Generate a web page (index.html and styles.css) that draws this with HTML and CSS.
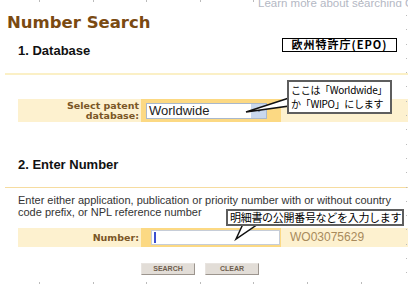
FILE: index.html
```html
<!DOCTYPE html>
<html lang="en">
<head>
  <meta charset="UTF-8">
  <title>Number Search</title>
  <link rel="stylesheet" href="styles.css">
</head>
<body>

  <div class="page">
    <div class="top-link">Learn more about searching Google Patents</div>
    <h1 class="title">Number Search</h1>

    <h2 class="step">1. Database</h2>
    <div class="rule"></div>

    <div class="form-row row-db">
      <div class="label">Select patent<br>database:</div>
      <div class="field">
        <div class="select">
          <span>Worldwide</span>
          <span class="select-arrow">
            <svg viewBox="0 0 8 5"><polygon points="1,1 7,1 4,4"></polygon></svg>
          </span>
        </div>
      </div>
    </div>

    <h2 class="step step-two">2. Enter Number</h2>
    <div class="rule"></div>

    <p class="hint">Enter either application, publication or priority number with or without country code prefix, or NPL reference number</p>

    <div class="form-row row-num">
      <div class="label">Number:</div>
      <div class="field">
        <div class="text-input"><span class="caret"></span></div>
      </div>
      <div class="example">WO03075629</div>
    </div>

    <div class="buttons">
      <button class="btn">SEARCH</button>
      <button class="btn">CLEAR</button>
    </div>
  </div>

  <!-- annotations laid over the screenshot -->
  <div class="tag">欧州特許庁(EPO)</div>

  <svg class="tails" viewBox="0 0 408 285">
    <polygon points="289,98 246,112 289,106"></polygon>
    <polygon points="243,224 236,239 258,224"></polygon>
  </svg>

  <div class="note note-db">ここは「Worldwide」<br>か「WIPO」にします</div>
  <div class="note note-num">明細書の公開番号などを入力します</div>

  <div class="ticks-top"></div>
  <div class="ticks-bottom"></div>
  <div class="ticks-right"></div>

</body>
</html>
```

FILE: styles.css
```css
body {
  margin: 0;
  width: 408px;
  height: 285px;
  overflow: hidden;
  position: relative;
  background: #fff;
  font-family: "Liberation Sans", Arial, sans-serif;
}

.page {
  display: flex;
  flex-direction: column;
}

.top-link {
  margin-top: -3px;
  padding-left: 258px;
  height: 10px;
  font-size: 11.5px;
  line-height: 12px;
  color: #b4b8c4;
  white-space: nowrap;
  overflow: hidden;
}

.title {
  margin: 6px 0 0 7px;
  font-family: "DejaVu Sans", Verdana, sans-serif;
  font-size: 16.5px;
  font-weight: bold;
  line-height: 20px;
  color: #7a4a12;
}

.step {
  margin: 10px 0 0 18px;
  font-size: 13px;
  font-weight: bold;
  line-height: 16px;
  color: #111;
}

.step-two {
  margin-top: 35px;
}

.rule {
  height: 2px;
  margin: 14px 0 0 5px;
  background: #fbf0c6;
}

.step-two + .rule {
  margin-top: 14px;
  height: 1px;
  background: #f6dca0;
}

.form-row {
  display: flex;
  margin-left: 18px;
  background: #fdf1cf;
}

.row-db {
  margin-top: 24px;
  height: 23px;
}

.label {
  width: 123px;
  padding-right: 2px;
  box-sizing: border-box;
  text-align: right;
  font-family: "DejaVu Sans", Verdana, sans-serif;
  font-size: 9.5px;
  font-weight: bold;
  line-height: 10px;
  color: #7a5626;
  display: flex;
  flex-direction: column;
  justify-content: center;
}

.field {
  width: 140px;
  background: #fcd983;
  display: flex;
  align-items: center;
  padding-left: 5px;
  box-sizing: border-box;
}

.select {
  width: 121px;
  height: 16px;
  box-sizing: border-box;
  border: 1px solid #a9b8cc;
  background: #fff;
  display: flex;
  align-items: center;
  justify-content: space-between;
  font-size: 13px;
  color: #222;
  padding-left: 2px;
}

.select-arrow {
  width: 15px;
  height: 14px;
  background: #c9d8ee;
  display: flex;
  align-items: center;
  justify-content: center;
}

.select-arrow svg {
  width: 6px;
  height: 4px;
  fill: #6a7fa0;
}

.hint {
  margin: 6px 0 0 18px;
  width: 388px;
  font-size: 11px;
  line-height: 12px;
  color: #333;
}

.row-num {
  margin-top: 10px;
  height: 19px;
}

.row-num .field {
  padding-left: 10px;
}

.text-input {
  width: 129px;
  height: 15px;
  box-sizing: border-box;
  border: 1px solid #c6cdd8;
  background: #fff;
  display: flex;
  align-items: center;
  padding-left: 2px;
}

.caret {
  width: 2px;
  height: 11px;
  background: #3c4fd0;
}

.example {
  padding-left: 9px;
  font-size: 12px;
  line-height: 19px;
  color: #a88a5c;
}

.buttons {
  display: flex;
  gap: 10px;
  margin: 16px 0 0 141px;
}

.btn {
  width: 54px;
  height: 12px;
  padding: 0;
  border: 1px solid #9c958e;
  border-top-color: #e8e4e0;
  border-left-color: #e8e4e0;
  background: #e2ddd7;
  font-family: "Liberation Sans", Arial, sans-serif;
  font-size: 7px;
  font-weight: bold;
  line-height: 10px;
  color: #6e5e4e;
}

.tag {
  position: absolute;
  left: 282px;
  top: 38px;
  width: 115px;
  height: 14px;
  box-sizing: border-box;
  border: 1.5px solid #000;
  background: #fff;
  font-family: "Noto Sans CJK JP", sans-serif;
  font-size: 11px;
  font-weight: bold;
  line-height: 11px;
  letter-spacing: 1px;
  text-align: center;
  color: #000;
}

.tails {
  position: absolute;
  left: 0;
  top: 0;
  width: 408px;
  height: 285px;
}

.tails polygon {
  fill: #fff;
  stroke: #111;
  stroke-width: 1.5;
}

.note {
  position: absolute;
  box-sizing: border-box;
  border: 2px solid #5e5e5e;
  background: #fff;
  font-family: "Noto Sans CJK JP", sans-serif;
  color: #000;
  white-space: nowrap;
}

.note-db {
  left: 287px;
  top: 80px;
  width: 105px;
  height: 34px;
  padding: 1px 0 0 2px;
  font-size: 10px;
  line-height: 14px;
  letter-spacing: -0.3px;
}

.note-num {
  left: 226px;
  top: 209px;
  width: 178px;
  height: 17px;
  padding-left: 2px;
  font-size: 11px;
  line-height: 13px;
  letter-spacing: -0.3px;
}

.ticks-top,
.ticks-bottom {
  position: absolute;
  left: 39px;
  right: 0;
  height: 2px;
  background: repeating-linear-gradient(to right, #bbb 0, #bbb 1px, transparent 1px, transparent 53.6px);
}

.ticks-top {
  top: 0;
}

.ticks-bottom {
  bottom: 1px;
}

.ticks-right {
  position: absolute;
  right: 1px;
  top: 15px;
  bottom: 0;
  width: 1px;
  background: repeating-linear-gradient(to bottom, #bbb 0, #bbb 1px, transparent 1px, transparent 14.3px);
}
```
